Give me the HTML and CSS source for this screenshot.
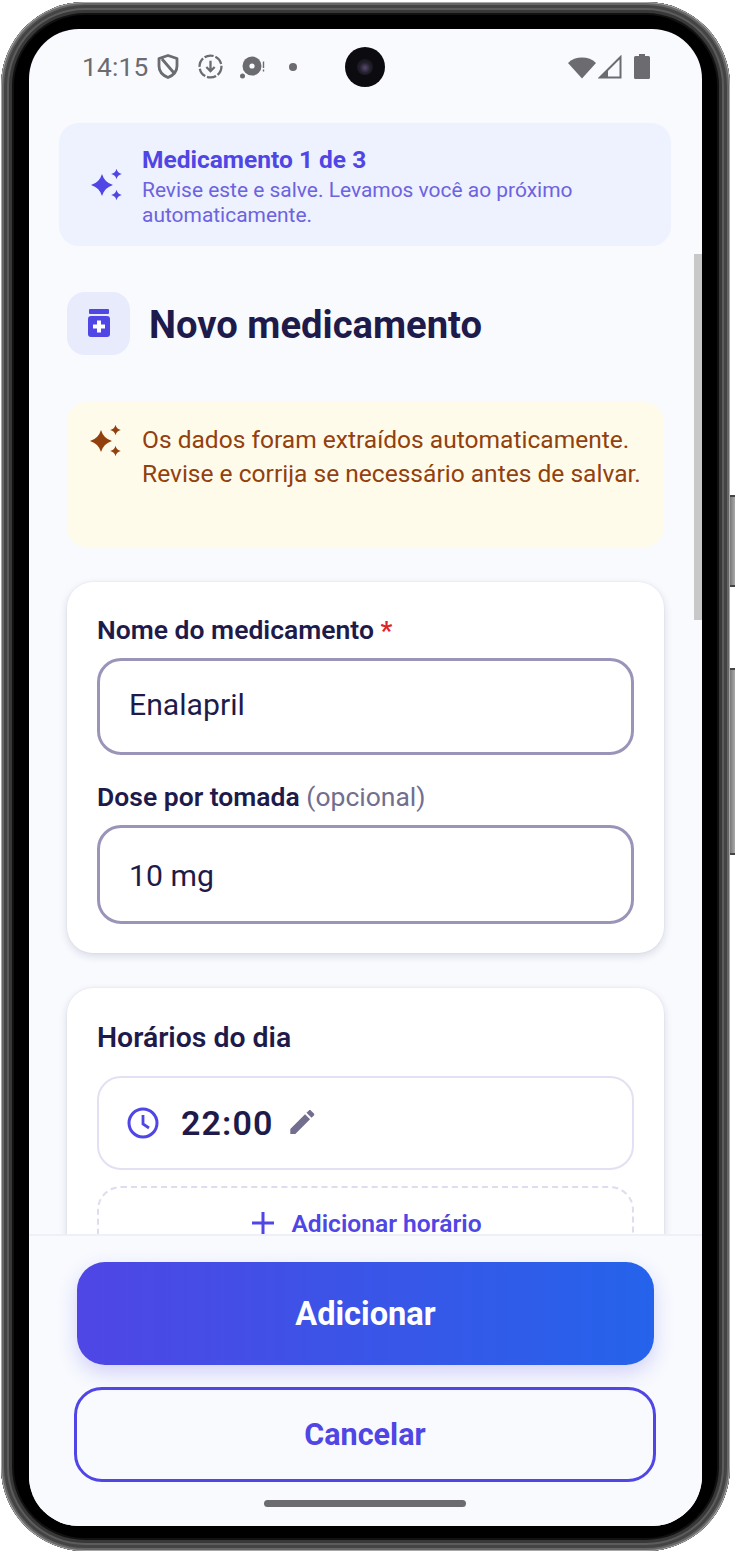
FILE: index.html
```html
<!DOCTYPE html>
<html lang="pt-BR">
<head>
<meta charset="utf-8">
<title>Novo medicamento</title>
<link rel="stylesheet" href="styles.css">
</head>
<body>
<svg class="defs" width="0" height="0" aria-hidden="true">
  <defs>
    <path id="sparkles" d="M11 0Q13.500 8.500 22 11Q13.500 13.500 11 22Q8.500 13.500 0 11Q8.500 8.500 11 0ZM25.500 -5.300Q26.500 -1 30.800 0Q26.500 1 25.500 5.300Q24.500 1 20.200 0Q24.500 -1 25.500 -5.300ZM25.500 15.700Q26.500 20 30.800 21Q26.500 22 25.500 26.300Q24.500 22 20.200 21Q24.500 20 25.500 15.700Z"/>
  </defs>
</svg>
<div class="stage">
  <div class="side-key side-key-a"></div>
  <div class="side-key side-key-b"></div>
  <div class="frame">
    <div class="screen">
      <div class="status">
        <span class="clock">14:15</span>
        <svg class="st-shield" viewBox="0 0 22 25"><path d="M11 1.500 20 4.500V12C20 17.500 16 21.500 11 23.500 6 21.500 2 17.500 2 12V4.500Z M5 5 17 19" fill="none" stroke="#6b6b70" stroke-width="2.800" stroke-linejoin="round"/></svg>
        <svg class="st-down" viewBox="0 0 24 24"><circle cx="12" cy="12" r="10.500" fill="none" stroke="#6b6b70" stroke-width="2.200" stroke-dasharray="9 1.800"/><path d="M12 6.500V16M8 12.500 12 16.500 16 12.500" fill="none" stroke="#6b6b70" stroke-width="2.200"/></svg>
        <svg class="st-disc" viewBox="0 0 26 24"><circle cx="12" cy="10" r="9.500" fill="#6b6b70"/><circle cx="12" cy="10" r="2.600" fill="#f8fafe"/><circle cx="2.500" cy="20" r="2.500" fill="#6b6b70"/><path d="M23.500 5.500V12M23.500 13.500V15.500" stroke="#6b6b70" stroke-width="1.400"/></svg>
        <span class="st-dot"></span>
        <span class="st-spacer"></span>
        <svg class="st-wifi" viewBox="0 0 28 24"><path d="M14 23.500 0 8C7 .7 21 .7 28 8Z" fill="#6b6b70"/></svg>
        <svg class="st-signal" viewBox="0 0 24 24"><path d="M22.500 2V22.500H2Z" fill="none" stroke="#6b6b70" stroke-width="2"/><path d="M2 22.500 10 15V22.500Z" fill="#6b6b70"/></svg>
        <svg class="st-batt" viewBox="0 0 16 25"><path d="M5 0H11V2H14.500Q16 2 16 3.500V23.500Q16 25 14.500 25H1.500Q0 25 0 23.500V3.500Q0 2 1.500 2H5Z" fill="#6b6b70"/></svg>
      </div>
      <div class="camera"><span class="lens"></span></div>

      <main class="scroll">
        <section class="banner">
          <svg class="spark" viewBox="0 -6 31 33"><use href="#sparkles"/></svg>
          <div class="banner-text">
            <h2 class="banner-title">Medicamento 1 de 3</h2>
            <p class="banner-sub">Revise este e salve. Levamos você ao próximo automaticamente.</p>
          </div>
        </section>

        <div class="column">
          <header class="page-head">
            <div class="tile">
              <svg class="jar" viewBox="0 0 22 29"><rect x="1" y="0" width="20" height="5" rx="1"/><path d="M3 7H19Q22 7 22 10V25Q22 28 19 28H3Q0 28 0 25V10Q0 7 3 7Z"/><path class="jar-cross" d="M9 11.500H13V15.500H17V19.500H13V23.500H9V19.500H5V15.500H9Z"/></svg>
            </div>
            <h1 class="page-title">Novo medicamento</h1>
          </header>

          <section class="notice">
            <svg class="spark spark-amber" viewBox="0 -6 31 33"><use href="#sparkles"/></svg>
            <p class="notice-text">Os dados foram extraídos automaticamente. Revise e corrija se necessário antes de salvar.</p>
          </section>

          <section class="card card-form">
            <label class="label">Nome do medicamento <span class="req">*</span></label>
            <div class="input input-a">Enalapril</div>
            <label class="label label-gap">Dose por tomada <span class="opt">(opcional)</span></label>
            <div class="input input-b">10 mg</div>
          </section>

          <section class="card card-times">
            <h3 class="section-title">Horários do dia</h3>
            <div class="time-row">
              <svg class="clock-ico" viewBox="0 0 32 32"><circle cx="16" cy="16" r="14" fill="none" stroke="#4f46e5" stroke-width="3"/><path d="M16 8V17L22 21" fill="none" stroke="#4f46e5" stroke-width="2.800"/></svg>
              <span class="time-val">22:00</span>
              <svg class="edit-ico" viewBox="3 3 18.300 18"><path d="M3 17.250V21h3.750L17.810 9.940l-3.750-3.750L3 17.250zM20.710 7.040c.39-.39.39-1.020 0-1.410l-2.340-2.340c-.39-.39-1.020-.39-1.410 0l-1.830 1.830 3.750 3.750 1.830-1.830z" fill="#726e8f"/></svg>
            </div>
            <div class="add-row">
              <svg class="plus-ico" viewBox="0 0 22 22"><path d="M11 0V22M0 11H22" stroke="#4f46e5" stroke-width="3"/></svg>
              <span class="add-text">Adicionar horário</span>
            </div>
          </section>
        </div>
      </main>

      <div class="scrollbar"></div>

      <footer class="footer">
        <button class="btn-primary" type="button">Adicionar</button>
        <button class="btn-secondary" type="button">Cancelar</button>
        <div class="home-bar"></div>
      </footer>
    </div>
  </div>
</div>
</body>
</html>
```

FILE: styles.css
```css
* { box-sizing: border-box; }
html, body { margin: 0; padding: 0; background: #fff; }
body { font-family: Roboto, "Liberation Sans", sans-serif; width: 735px; height: 1553px; overflow: hidden; }
.defs { position: absolute; }
h1, h2, h3, p { margin: 0; }

.stage { position: relative; width: 735px; height: 1553px; padding: 2px 5px 2px 1px; }
.frame {
  width: 729px; height: 1549px; padding: 27px 27px 25px 28px;
  background: #000; border-radius: 84px;
  box-shadow: inset 0 0 0 1px #a8a8a8, inset 0 0 0 3px #666, inset 0 0 0 6px #444, inset 0 0 0 8px #5c5c5c, inset 0 0 0 11px #383838, inset 0 0 0 13px #111;
}
.side-key { position: absolute; left: 730px; width: 5px; background: linear-gradient(90deg, #777, #aaa); border-top: 2px solid #444; border-bottom: 2px solid #444; }
.side-key-a { top: 495px; height: 92px; }
.side-key-b { top: 668px; height: 187px; }

.screen { position: relative; display: flex; flex-direction: column; width: 673px; height: 1497px; background: #f8fafe; border-radius: 50px; overflow: hidden; }

.status { display: flex; align-items: center; flex: none; height: 75px; padding: 0 52px 0 53px; color: #6b6b70; }
.clock { font-size: 26.300px; letter-spacing: .2px; margin-right: 8px; }
.st-shield { width: 22px; height: 25px; margin-right: 19px; }
.st-down { width: 25px; height: 25px; margin-right: 17px; }
.st-disc { width: 26px; height: 24px; margin-right: 23px; margin-top: 3px; }
.st-dot { width: 8px; height: 8px; border-radius: 50%; background: #6b6b70; }
.st-spacer { flex: 1; }
.st-wifi { width: 28px; height: 24px; margin-right: 2px; }
.st-signal { width: 24px; height: 24px; margin-right: 12px; }
.st-batt { width: 16px; height: 25px; }
.camera { position: absolute; left: 316px; top: 18px; width: 40px; height: 40px; border-radius: 50%; background: #0c0c10; display: flex; align-items: center; justify-content: center; }
.lens { width: 16px; height: 16px; border-radius: 50%; background: radial-gradient(circle at 50% 55%, #5a4a70 0, #23202c 45%, #0c0c10 100%); }

.scroll { flex: none; height: 1130px; padding: 19px 31px 0 30px; overflow: hidden; }
.banner { display: flex; align-items: center; height: 123px; background: #eef1fe; border-radius: 20px; padding: 0 0 0 32px; }
.spark { flex: none; width: 31px; height: 33px; fill: #4f46e5; margin-right: 20px; }
.banner-text { padding-top: 4px; }
.banner-title { font-size: 24.500px; line-height: 30px; font-weight: 700; color: #4f46e5; }
.banner-sub { font-size: 20.950px; line-height: 25px; color: #6b63e0; width: 440px; margin-top: 3px; }

.column { padding: 0 7px 0 8px; }
.page-head { display: flex; align-items: center; margin-top: 46px; height: 63px; }
.tile { flex: none; width: 63px; height: 63px; border-radius: 18px; background: #e8ebfb; display: flex; align-items: center; justify-content: center; }
.jar { width: 22px; height: 29px; fill: #4f46e5; }
.jar-cross { fill: #fff; }
.page-title { margin-left: 19px; padding-top: 2px; font-size: 38.200px; font-weight: 700; color: #1e1b4b; }

.notice { display: flex; align-items: flex-start; margin-top: 47px; height: 145px; background: #fffbeb; border-radius: 20px; padding: 21px 10px 0 23px; }
.spark-amber { fill: #92400e; margin-right: 21px; margin-top: 1px; }
.notice-text { font-size: 24.550px; line-height: 34px; color: #92400e; }

.card { background: #fff; border-radius: 26px; box-shadow: 0 3px 8px rgba(30, 27, 75, .14), 0 0 2px rgba(30, 27, 75, .08); padding: 30px 30px 0; }
.card-form { margin-top: 35px; height: 371px; }
.card-times { margin-top: 35px; height: 400px; }
.label { display: block; font-size: 26.500px; line-height: 36px; font-weight: 600; color: #1e1b4b; }
.section-title { font-size: 28.400px; line-height: 40px; font-weight: 600; color: #1e1b4b; }
.label-gap { margin-top: 24px; }
.req { color: #dc2626; }
.opt { font-weight: 400; color: #726e8f; }
.input { display: flex; align-items: center; margin-top: 10px; padding-left: 29px; border: 3px solid #9a95b8; border-radius: 24px; font-size: 30.200px; color: #1e1b4b; background: #fff; }
.input-a { height: 97px; padding-bottom: 5px; }
.input-b { height: 99px; padding-top: 1px; }
.time-row { display: flex; align-items: center; height: 94px; margin-top: 18px; padding-left: 28px; border: 2px solid #e2e0f3; border-radius: 24px; }
.clock-ico { width: 32px; height: 32px; margin-right: 22px; }
.time-val { font-size: 34px; font-weight: 600; letter-spacing: 1.100px; color: #1e1b4b; }
.edit-ico { width: 25px; height: 24px; margin-left: 17px; margin-top: -2px; }
.add-row { display: flex; align-items: center; justify-content: center; height: 74px; margin-top: 16px; padding-left: 3px; border: 2px dashed #dedcef; border-radius: 24px; }
.plus-ico { width: 22px; height: 22px; margin-right: 17px; }
.add-text { font-size: 24.600px; font-weight: 600; color: #4f46e5; }

.scrollbar { position: absolute; left: 665px; top: 225px; width: 8px; height: 366px; background: #c8c8c8; }

.footer { flex: 1; position: relative; display: flex; flex-direction: column; align-items: center; background: #f8fafe; border-top: 2px solid #eeeff8; padding-top: 26px; }
.btn-primary { width: 577px; height: 103px; border: 0; border-radius: 28px; background: linear-gradient(90deg, #4f46e5, #2563eb); box-shadow: 0 8px 20px rgba(79, 70, 229, .22); color: #fff; font: 700 32.600px Roboto, sans-serif; }
.btn-secondary { width: 582px; height: 95px; margin-top: 22px; margin-left: -1px; border: 3px solid #4f46e5; border-radius: 28px; background: transparent; color: #4f46e5; font: 700 30.500px Roboto, sans-serif; }
.home-bar { width: 202px; height: 7px; margin-top: 18px; margin-left: -1px; border-radius: 4px; background: #6b6b70; }
```
